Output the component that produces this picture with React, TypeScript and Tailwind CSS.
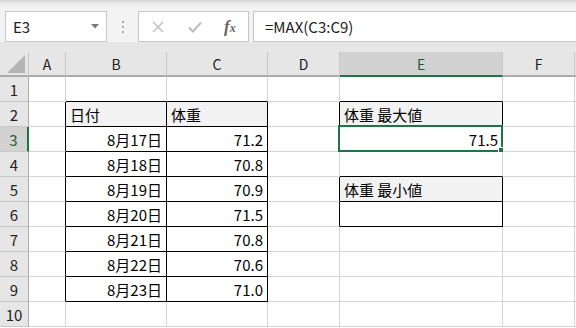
import React from "react";

const FONT = { fontFamily: '"Noto Sans CJK JP", "Noto Sans", sans-serif' };

type Cell = { t: string; align?: "l" | "r"; head?: boolean };

const cols = [
  { k: "A", w: "w-[37px]" },
  { k: "B", w: "w-[101px]" },
  { k: "C", w: "w-[101px]" },
  { k: "D", w: "w-[72px]" },
  { k: "E", w: "w-[163px]" },
  { k: "F", w: "w-[72px]" },
];

const data: Record<string, Cell> = {
  B2: { t: "日付", align: "l", head: true },
  C2: { t: "体重", align: "l", head: true },
  B3: { t: "8月17日", align: "r" },
  B4: { t: "8月18日", align: "r" },
  B5: { t: "8月19日", align: "r" },
  B6: { t: "8月20日", align: "r" },
  B7: { t: "8月21日", align: "r" },
  B8: { t: "8月22日", align: "r" },
  B9: { t: "8月23日", align: "r" },
  C3: { t: "71.2", align: "r" },
  C4: { t: "70.8", align: "r" },
  C5: { t: "70.9", align: "r" },
  C6: { t: "71.5", align: "r" },
  C7: { t: "70.8", align: "r" },
  C8: { t: "70.6", align: "r" },
  C9: { t: "71.0", align: "r" },
  E2: { t: "体重 最大値", align: "l", head: true },
  E3: { t: "71.5", align: "r" },
  E5: { t: "体重 最小値", align: "l", head: true },
};

const letters = ["A", "B", "C", "D", "E", "F", "G"];

function inRegion(c: number, r: number) {
  const L = letters[c];
  if ((L === "B" || L === "C") && r >= 2 && r <= 9) return true;
  if (L === "E" && (r === 2 || r === 3 || r === 5 || r === 6)) return true;
  return false;
}

function GridCell({ c, r }: { c: number; r: number }) {
  const key = letters[c] + r;
  const cell = data[key];
  const rightBlack = inRegion(c, r) || inRegion(c + 1, r);
  const bottomBlack = inRegion(c, r) || inRegion(c, r + 1);
  const selected = key === "E3";
  return (
    <div
      className={
        "relative h-full shrink-0 border-r border-b flex items-center px-[4px] text-[15px] text-black leading-none " +
        cols[c].w +
        " " +
        (rightBlack ? "border-r-black " : "border-r-[#d4d4d4] ") +
        (bottomBlack ? "border-b-black " : "border-b-[#d4d4d4] ") +
        (cell?.head ? "bg-[#f2f2f2] " : "bg-white ") +
        (cell?.align === "r" ? "justify-end" : "justify-start")
      }
    >
      {cell && <span className="whitespace-nowrap">{cell.t}</span>}
      {selected && (
        <>
          <div className="absolute left-[-2px] top-[-2px] right-[-1px] bottom-[-1px] border-2 border-[#217346] pointer-events-none" />
          <div className="absolute right-[-3px] bottom-[-3px] w-[7px] h-[7px] bg-[#217346] border border-white" />
        </>
      )}
    </div>
  );
}

export default function App() {
  const rows = Array.from({ length: 10 }, (_, i) => i + 1);
  return (
    <div className="w-[576px] h-[328px] overflow-hidden bg-white select-none" style={FONT}>
      {/* Formula bar */}
      <div className="h-[42px] flex items-end bg-[linear-gradient(to_bottom,#d6d6d6_0px,#ececec_4px,#f3f3f3_9px,#f3f3f3_100%)]">
        <div className="flex items-stretch h-[31px] w-full pl-[5px]">
          <div className="w-[102px] border border-[#c6c6c6] bg-white flex items-center justify-between pl-[7px] pr-[7px]">
            <span className="text-[15px] text-[#222] leading-none">E3</span>
            <svg width="8" height="5" viewBox="0 0 8 5">
              <path d="M0 0 L8 0 L4 4.5 Z" fill="#7a7a7a" />
            </svg>
          </div>
          <div className="w-[31px] flex flex-col items-center justify-center gap-[3px]">
            <div className="w-[2px] h-[2px] bg-[#a8a8a8]" />
            <div className="w-[2px] h-[2px] bg-[#a8a8a8]" />
            <div className="w-[2px] h-[2px] bg-[#a8a8a8]" />
          </div>
          <div className="w-[111px] border border-[#c6c6c6] bg-white flex items-center pl-[13px]">
            <svg width="12" height="12" viewBox="0 0 12 12">
              <path d="M1 1 L11 11 M11 1 L1 11" stroke="#bcbcbc" strokeWidth="1.4" />
            </svg>
            <svg width="14" height="12" viewBox="0 0 14 12" className="ml-[24px]">
              <path d="M1 6.5 L5 10.5 L13 1.5" stroke="#bcbcbc" strokeWidth="2" fill="none" />
            </svg>
            <span
              className="ml-[22px] text-[17px] italic font-bold text-[#666] leading-none"
              style={{ fontFamily: '"Liberation Serif", "DejaVu Serif", serif' }}
            >
              f<span className="text-[12px]">x</span>
            </span>
          </div>
          <div className="flex-1 ml-[4px] border-y border-l border-[#c6c6c6] bg-white flex items-center pl-[11px]">
            <span className="text-[15px] text-[#222] leading-none">=MAX(C3:C9)</span>
          </div>
        </div>
      </div>
      <div className="h-[10px] bg-[#e6e6e6]" />
      {/* Column header */}
      <div className="h-[25px] flex bg-[#e6e6e6]">
        <div className="w-[29px] shrink-0 border-r border-b-2 border-r-[#c8c8c8] border-b-[#ababab] flex items-end justify-end pr-[3px] pb-[2px]">
          <svg width="18" height="18" viewBox="0 0 18 18">
            <path d="M18 0 L18 18 L0 18 Z" fill="#b4b4b4" />
          </svg>
        </div>
        {cols.map((c) => (
          <div
            key={c.k}
            className={
              "shrink-0 border-r border-b-2 flex items-center justify-center text-[14px] leading-none " +
              c.w +
              " " +
              (c.k === "E"
                ? "bg-[#d2d2d2] border-b-[#217346] border-r-[#c8c8c8] text-[#1e5b36]"
                : "border-b-[#ababab] border-r-[#c8c8c8] text-[#222]")
            }
          >
            {c.k}
          </div>
        ))}
        <div className="flex-1 border-b-2 border-b-[#ababab]" />
      </div>
      {/* Rows */}
      {rows.map((r) => (
        <div key={r} className="h-[25px] flex">
          <div
            className={
              "w-[29px] shrink-0 border-b flex items-center justify-center text-[15px] leading-none " +
              (r === 3
                ? "bg-[#d2d2d2] border-r-2 border-r-[#217346] border-b-[#c8c8c8] text-[#1e5b36]"
                : "bg-[#e6e6e6] border-r border-r-[#ababab] border-b-[#c8c8c8] text-[#222]")
            }
          >
            {r}
          </div>
          {cols.map((_, ci) => (
            <GridCell key={ci} c={ci} r={r} />
          ))}
          <div className="flex-1 border-b border-b-[#d4d4d4]" />
        </div>
      ))}
    </div>
  );
}
